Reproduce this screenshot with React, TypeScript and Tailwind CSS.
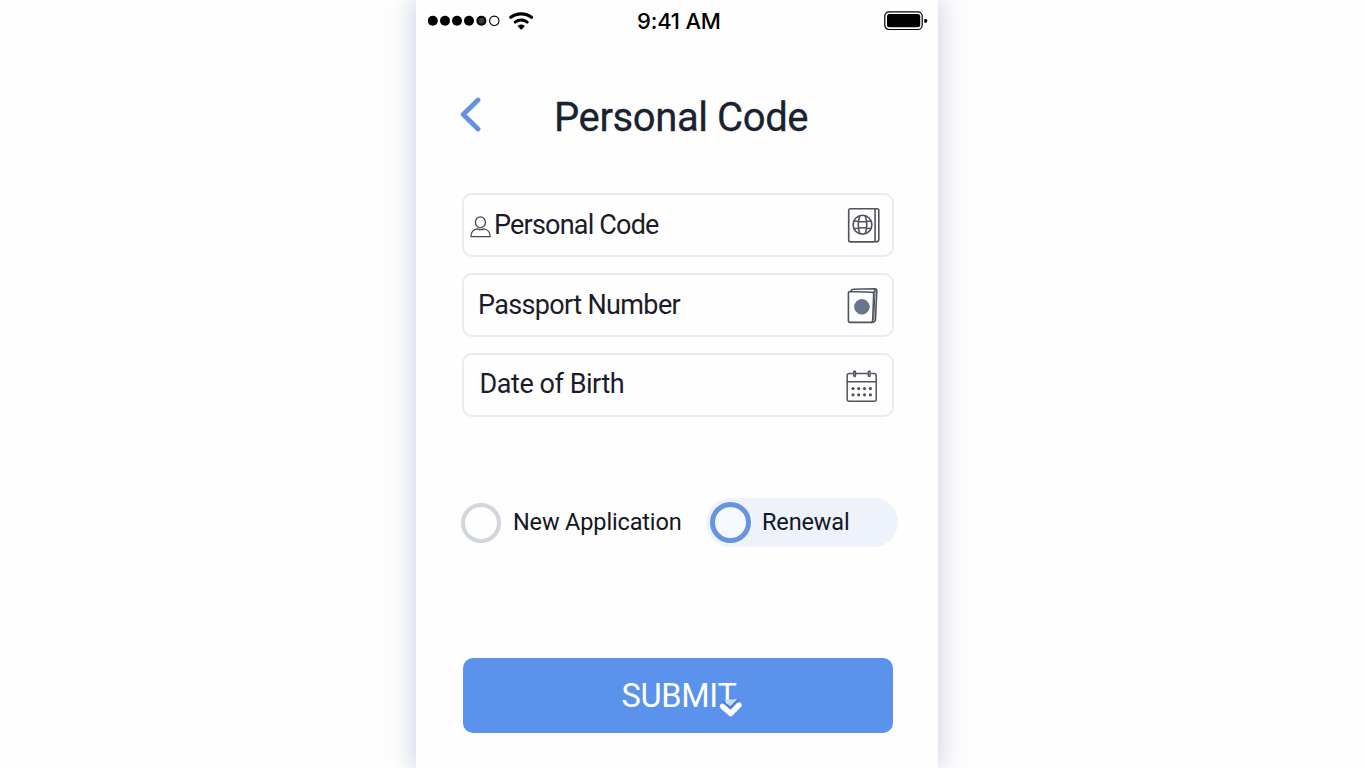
import type { ReactNode } from "react";

function StatusBar() {
  return (
    <div className="flex h-[42px] items-center pl-3 pr-2.5 text-black">
      <svg width="72" height="12" viewBox="0 0 72 12" className="shrink-0">
        {[4.8, 17, 29, 41, 53.4].map((cx) => (
          <circle key={cx} cx={cx} cy="5.8" r="5" fill="currentColor" />
        ))}
        <circle cx="53.4" cy="5.8" r="3" fill="#3a3a3a" />
        <circle cx="66.3" cy="5.8" r="4.7" fill="none" stroke="currentColor" strokeWidth="1.1" />
      </svg>
      <svg width="26" height="20" viewBox="0 0 26 20" fill="none" stroke="currentColor" className="ml-2 shrink-0">
        <path d="M2.8 6.3C8.6 1.6 17.7 1.6 23.5 6.3" strokeWidth="3.3" strokeLinecap="round" />
        <path d="M7.2 11.1c3.4-2.8 8.6-2.8 12 0" strokeWidth="3" strokeLinecap="round" />
        <path d="M10.7 15.2c1.6-1.1 3.4-1.1 5 0L13.2 17.5z" fill="currentColor" strokeWidth="1.8" strokeLinejoin="round" />
      </svg>
      <span className="ml-[103px] whitespace-nowrap font-[Inter,sans-serif] text-[22px] font-medium tracking-[-0.2px]">9:41 AM</span>
      <svg width="44" height="20" viewBox="0 0 44 20" className="ml-auto shrink-0">
        <rect x=".8" y=".9" width="37.4" height="17.6" rx="4.2" fill="none" stroke="currentColor" strokeWidth="1.2" />
        <rect x="3" y="3.1" width="33.2" height="13.2" rx="2.4" fill="currentColor" />
        <path d="M40.3 7.9h1.6q1.4 0 1.4 1.9t-1.4 1.9h-1.6z" fill="currentColor" />
      </svg>
    </div>
  );
}

function UserIcon() {
  return (
    <svg width="21" height="22" viewBox="0 0 21 22" fill="none" stroke="#444750" strokeWidth="1.3" strokeLinejoin="round">
      <ellipse cx="10.4" cy="6.3" rx="5" ry="5.4" />
      <path d="M1 20.6C.6 16 3.9 13.3 7.2 12.8c2.1 1 4.5 1 6.6 0 3.3.6 6.6 3.2 6.300 7.8z" />
    </svg>
  );
}

function GlobeBookIcon() {
  return (
    <svg width="34" height="38" viewBox="0 0 34 38" fill="none" stroke="#50535f" strokeWidth="1.6" strokeLinecap="round" strokeLinejoin="round">
      <rect x="1.7" y="2.7" width="26.4" height="33.2" rx="1.8" />
      <path d="M27.8 2.7h2.3q1.7 0 1.7 2v28.7q0 2.5-3.4 2.5" />
      <circle cx="15.5" cy="18.7" r="9.4" />
      <path d="M12.8 9.9c-1.9 5.5-1.9 12.1 0 17.6M18.3 9.9c1.9 5.5 1.9 12.1 0 17.6M7.4 15c5.3 1 10.9 1 16.2 0M7.4 22.5c5.3-1 10.9-1 16.2 0" />
    </svg>
  );
}

function PassportIcon() {
  return (
    <svg width="34" height="38" viewBox="0 0 34 38" fill="none" stroke="#50535f" strokeWidth="1.6" strokeLinecap="round" strokeLinejoin="round">
      <path d="M3 5.5 24.8 6.2q2 .1 1.9 2l-1 26.4q-.1 1.8-1.9 1.8H3.2q-1.8 0-1.8-1.8V7.1q0-1.6 1.6-1.6z" />
      <path d="M4 5.2Q4.3 3.3 6.1 3.2L27.8 2.7q2 0 2 2l-1.3 28.4q-.1 3.3-4 3.3M26.5 6.7 28.4 3.9" />
      <path d="m28 5.5-1.2 28" strokeWidth="1" />
      <circle cx="14.9" cy="20.8" r="7.4" fill="#69748e" stroke="#626c84" strokeWidth=".7" />
    </svg>
  );
}

function CalendarIcon() {
  return (
    <svg width="34" height="36" viewBox="0 0 34 36" fill="none" stroke="#50535f" strokeWidth="1.5" strokeLinecap="round" strokeLinejoin="round">
      <path d="M6.5 6.5H3.2q-2 0-2 2v23.7q0 2 2 2h25q2 0 2-2V8.5q0-2-2-2h-2.5M10.5 6.5h10.5" />
      <path d="M1.2 14.8h29" />
      <rect x="7.7" y="4" width="1.8" height="5.4" rx=".9" />
      <rect x="22.3" y="4" width="1.8" height="5.4" rx=".9" />
      {[21.6, 27.8].map((cy) =>
        [7, 12.7, 18.5, 24.4].map((cx) => (
          <circle key={`${cx}-${cy}`} cx={cx} cy={cy} r="1.6" fill="#50535f" stroke="none" />
        ))
      )}
    </svg>
  );
}

function Field({ className, children }: { className: string; children: ReactNode }) {
  return (
    <div className={`flex h-16 items-center justify-between rounded-[10px] border-2 border-[#e8ebf2] text-[27px] text-[#1b1c29] ${className}`}>
      {children}
    </div>
  );
}

export default function App() {
  return (
    <div className="h-screen overflow-hidden bg-[#fefefe]">
      <main className="ml-[416px] flex h-full w-[522px] flex-col bg-[#fefefe] font-[Roboto,sans-serif] shadow-[0_0_24px_3px_rgba(120,135,185,0.35)]">
        <StatusBar />

        <header className="mt-[43px] flex h-[60px] items-center pl-11">
          <svg width="22" height="36" viewBox="0 0 22 36" fill="none" stroke="#6293df" strokeWidth="4.8" strokeLinecap="round" strokeLinejoin="round" className="-mt-0.5">
            <path d="M18 4 3.2 18.5 18 33" />
          </svg>
          <h1 className="ml-[72px] mt-1.5 whitespace-nowrap text-[40px] leading-[48px] tracking-[-0.4px] text-[#182230] [-webkit-text-stroke:0.3px_#182230]">Personal Code</h1>
        </header>

        <section className="ml-[46px] mt-12 flex w-[432px] flex-col gap-4">
          <Field className="pl-[6px] pr-[11px]">
            <div className="flex items-center gap-[3px]">
              <span className="mt-1"><UserIcon /></span>
              <span className="whitespace-nowrap tracking-[-0.8px]">Personal Code</span>
            </div>
            <GlobeBookIcon />
          </Field>
          <Field className="pl-[14px] pr-[11px]">
            <span className="whitespace-nowrap tracking-[-0.65px]">Passport Number</span>
            <PassportIcon />
          </Field>
          <Field className="pl-[15.5px] pr-3">
            <span className="-mt-0.5 whitespace-nowrap tracking-[-0.45px]">Date of Birth</span>
            <CalendarIcon />
          </Field>
        </section>

        <div className="mt-[81px] flex items-center pl-[45px] text-[23.5px] leading-8 text-[#131722]">
          <div className="flex w-[245px] items-center gap-3">
            <span className="size-10 shrink-0 rounded-full border-4 border-[#d1d5dc]" />
            <span className="-mt-px whitespace-nowrap tracking-[-0.15px]">New Application</span>
          </div>
          <div className="flex h-[49px] w-48 items-center gap-[11px] rounded-full bg-[#edf2fb] pl-1">
            <span className="size-[41px] shrink-0 rounded-full border-[5px] border-[#6794da] bg-[#f5f8fe]" />
            <span className="-mt-px tracking-[-0.15px]">Renewal</span>
          </div>
        </div>

        <button className="relative ml-[47px] mt-[111px] h-[75px] w-[430px] shrink-0 rounded-[10px] bg-[#5a92ec] text-white">
          <span className="ml-0.5 text-[32.5px] leading-[48px] tracking-[-0.3px]">SUBMIT</span>
          <svg width="24" height="22" viewBox="0 0 24 22" className="absolute left-[256px] top-[38px]">
            <path d="M6 4 18.3 3 11 11z" fill="#c8dcfb" />
            <path d="m3.5 5.8 7.8 6L20 3.4" fill="none" stroke="#4d80d6" strokeWidth="2.4" />
            <path d="m3.6 10.4 8 7.2L20 9" fill="none" stroke="#fff" strokeWidth="5.4" strokeLinecap="round" strokeLinejoin="round" />
          </svg>
        </button>
      </main>
    </div>
  );
}
